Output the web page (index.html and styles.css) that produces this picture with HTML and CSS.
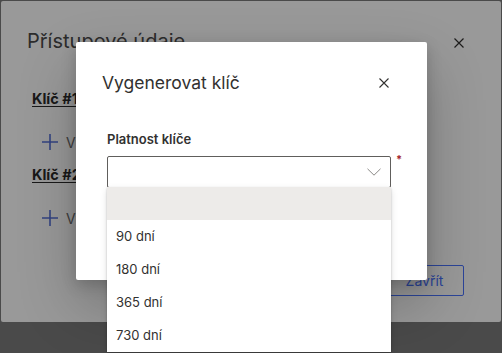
FILE: index.html
```html
<!DOCTYPE html>
<html lang="cs">
<head>
<meta charset="utf-8">
<title>Vygenerovat klíč</title>
<link rel="stylesheet" href="styles.css">
</head>
<body>
<div class="page">
  <section class="dialog outer">
    <header class="dlg-head outer-head">
      <h2 class="dlg-title outer-title">Přístupové údaje</h2>
      <span class="close">
        <svg width="10" height="10" viewBox="0 0 10 10"><path d="M0.5 0.5L9.5 9.5M9.5 0.5L0.5 9.5" stroke="#323130" stroke-width="1.2" fill="none"/></svg>
      </span>
    </header>
    <div class="outer-body">
      <div class="key-name">Klíč #1</div>
      <div class="add-btn">
        <svg class="plus" width="16" height="16" viewBox="0 0 16 16"><path d="M8 0V16M0 8H16" stroke="#5670d8" stroke-width="1.6" fill="none"/></svg>
        <span>Vygenerovat klíč</span>
      </div>
      <div class="key-name second">Klíč #2</div>
      <div class="add-btn">
        <svg class="plus" width="16" height="16" viewBox="0 0 16 16"><path d="M8 0V16M0 8H16" stroke="#5670d8" stroke-width="1.6" fill="none"/></svg>
        <span>Vygenerovat klíč</span>
      </div>
    </div>
    <footer class="outer-foot">
      <span class="btn-outline">Zavřít</span>
    </footer>
  </section>

  <div class="overlay"></div>

  <section class="dialog inner">
    <header class="dlg-head inner-head">
      <h2 class="dlg-title inner-title">Vygenerovat klíč</h2>
      <span class="close">
        <svg width="10" height="10" viewBox="0 0 10 10"><path d="M0.5 0.5L9.5 9.5M9.5 0.5L0.5 9.5" stroke="#323130" stroke-width="1.1" fill="none"/></svg>
      </span>
    </header>
    <div class="inner-body">
      <label class="field-label">Platnost klíče</label>
      <div class="field-row">
        <div class="select">
          <svg class="chev" width="14" height="8" viewBox="0 0 14 8"><path d="M0.5 0.8L7 7.2L13.5 0.8" stroke="#8a8886" stroke-width="1" fill="none"/></svg>
        </div>
        <span class="req">*</span>
      </div>
    </div>
  </section>

  <ul class="listbox">
    <li class="opt selected"></li>
    <li class="opt">90 dní</li>
    <li class="opt">180 dní</li>
    <li class="opt">365 dní</li>
    <li class="opt">730 dní</li>
  </ul>
</div>
</body>
</html>
```
FILE: styles.css
```css
* { box-sizing: border-box; }
html, body { margin: 0; padding: 0; }
body {
  background: #7c7c7c;
  font-family: Inter, "Noto Sans", sans-serif;
  color: #323130;
  overflow: hidden;
}
.page {
  position: relative;
  width: 502px;
  height: 353px;
}
.dialog {
  position: absolute;
  background: #fff;
  display: flex;
  flex-direction: column;
}
.outer {
  left: 1px;
  top: 1px;
  width: 500px;
  height: 321px;
  border-radius: 2px;
}
.inner {
  left: 76px;
  top: 42px;
  width: 351px;
  height: 238px;
  border-radius: 2px;
  box-shadow: 0 25px 58px rgba(0,0,0,0.24), 0 5px 15px rgba(0,0,0,0.18);
}
.overlay {
  position: absolute;
  inset: 0;
  background: rgba(0,0,0,0.4);
}
.dlg-head {
  display: flex;
  align-items: center;
  justify-content: space-between;
}
.dlg-title {
  margin: 0;
  font-weight: 400;
  color: #323130;
}
.close { display: flex; }
.outer-head { padding: 26px 37px 0 26px; }
.outer-title { font-size: 20px; line-height: 28px; color: #4a4a4a; }
.outer-head .close { margin-top: 3px; }
.outer-body {
  padding: 34px 31px 0 31px;
  display: flex;
  flex-direction: column;
  align-items: flex-start;
}
.key-name {
  font-size: 14.5px;
  line-height: 20px;
  font-weight: 700;
  text-decoration: underline;
  text-underline-offset: 2px;
  color: #2a2a2a;
}
.key-name.second { margin-top: 7px; }
.add-btn {
  display: flex;
  align-items: center;
  gap: 8px;
  height: 32px;
  margin-top: 17px;
  padding-left: 10px;
  font-size: 14px;
  color: #6a6a6a;
}
.outer-foot {
  margin-top: auto;
  display: flex;
  justify-content: flex-end;
  padding: 0 37px 26px 0;
}
.btn-outline {
  display: flex;
  align-items: center;
  justify-content: center;
  width: 79px;
  height: 31px;
  border: 1px solid #4a74ff;
  border-radius: 2px;
  font-size: 14px;
  color: #4a74ff;
}
.inner-head { padding: 29px 38px 0 26px; }
.inner-title { font-size: 17.5px; line-height: 24px; }
.inner-body { padding: 35px 36px 0 31px; }
.field-label {
  display: block;
  font-size: 13px;
  line-height: 18px;
  font-weight: 600;
  color: #323130;
  margin-bottom: 8px;
}
.field-row { display: flex; align-items: flex-start; }
.select {
  flex: 0 0 284px;
  width: 284px;
  height: 32px;
  border: 1px solid #605e5c;
  border-radius: 2px;
  display: flex;
  align-items: center;
  justify-content: flex-end;
  padding-right: 9px;
  background: #fff;
}
.req {
  flex: 0 0 auto;
  margin-left: 5px;
  margin-top: -3px;
  font-size: 11px;
  line-height: 12px;
  font-weight: 700;
  color: #a4262c;
}
.listbox {
  position: absolute;
  left: 107px;
  top: 187px;
  width: 284px;
  margin: 0;
  padding: 0;
  list-style: none;
  background: #fff;
  box-shadow: 0 3px 7px rgba(0,0,0,0.13), 0 1px 2px rgba(0,0,0,0.2);
}
.opt {
  height: 33px;
  line-height: 33px;
  padding-left: 9px;
  font-size: 13px;
  color: #323130;
}
.opt.selected { background: #edebe9; }
```
